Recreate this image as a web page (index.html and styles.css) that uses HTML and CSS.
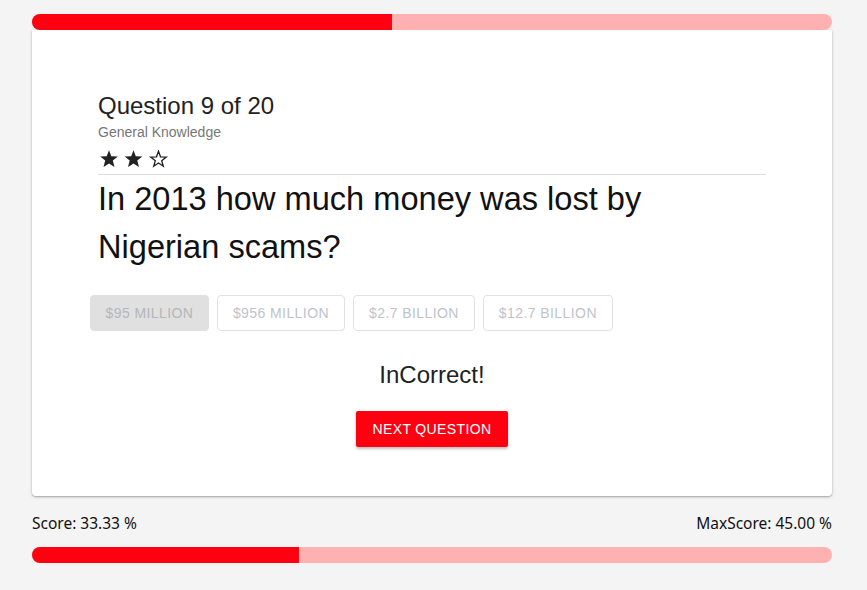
FILE: index.html
```
<!DOCTYPE html>
<html>
<head>
<meta charset="utf-8">
<link rel="stylesheet" href="styles.css">
</head>
<body>
<div class="page">
  <div class="bar bar-top"><div class="fill" style="width:45%"></div></div>
  <div class="card">
    <h1 class="title">Question 9 of 20</h1>
    <div class="category">General Knowledge</div>
    <div class="stars">
      <svg width="70" height="18" viewBox="0 0 70 18">
        <polygon points="9,0.3 11.3,6.2 17.8,6.5 12.8,10.6 14.5,17 9,13.4 3.5,17 5.2,10.6 0.2,6.5 6.7,6.2" fill="#222"/>
        <polygon transform="translate(24.5 0)" points="9,0.3 11.3,6.2 17.8,6.5 12.8,10.6 14.5,17 9,13.4 3.5,17 5.2,10.6 0.2,6.5 6.7,6.2" fill="#222"/>
        <polygon transform="translate(49.5 0)" points="9,1.2 11.0,6.8 16.8,7.1 12.2,10.7 13.8,16.2 9,13 4.2,16.2 5.8,10.7 1.2,7.1 7.0,6.8" fill="none" stroke="#222" stroke-width="1.3" stroke-linejoin="miter"/>
      </svg>
    </div>
    <div class="question">In 2013 how much money was lost by Nigerian scams?</div>
    <div class="answers">
      <button class="answer chosen">$95 Million</button>
      <button class="answer">$956 Million</button>
      <button class="answer">$2.7 Billion</button>
      <button class="answer">$12.7 Billion</button>
    </div>
    <div class="result">InCorrect!</div>
    <div class="next-wrap"><button class="next">Next Question</button></div>
  </div>
  <div class="scores">
    <span>Score: 33.33 %</span>
    <span>MaxScore: 45.00 %</span>
  </div>
  <div class="bar bar-bottom"><div class="fill" style="width:33.33%"></div></div>
</div>
</body>
</html>
```
FILE: styles.css
```
html, body {
  margin: 0;
  padding: 0;
  background: #f4f4f4;
}
.page {
  width: 800px;
  margin-left: 32px;
  padding-top: 14px;
  font-family: "Liberation Sans", Arial, sans-serif;
}
.bar {
  height: 16px;
  border-radius: 8px;
  background: #ffb0b0;
  overflow: hidden;
  display: flex;
}
.fill {
  height: 100%;
  background: #ff0010;
}
.bar-top {
  position: relative;
  z-index: 2;
}
.card {
  background: #fff;
  border-radius: 0 0 4px 4px;
  box-shadow: 0 1px 3px rgba(0,0,0,0.28), 0 1px 1px rgba(0,0,0,0.1);
  padding: 62px 66px 0 66px;
  height: 404px;
}
.title {
  margin: 0;
  font-size: 24px;
  line-height: 28px;
  font-weight: normal;
  color: #222;
}
.category {
  margin-top: 4px;
  font-size: 14px;
  line-height: 16px;
  color: #777;
}
.stars {
  margin-top: 10px;
  height: 18px;
  padding-left: 2px;
}
.stars svg {
  display: block;
}
.question {
  margin-top: 6px;
  border-top: 1px solid #ddd;
  font-size: 32.6px;
  line-height: 48px;
  color: #111;
  padding-right: 100px;
}
.answers {
  display: flex;
  gap: 8px;
  margin-top: 24px;
  margin-left: -8px;
}
.answer {
  height: 36px;
  padding: 0 15px;
  border: 1px solid #e2e2e2;
  border-radius: 4px;
  background: #fff;
  font-family: "Liberation Sans", Arial, sans-serif;
  font-size: 14px;
  letter-spacing: 0.42px;
  text-transform: uppercase;
  color: #bfc3ca;
}
.answer.chosen {
  background: #e0e0e0;
  border-color: #e0e0e0;
  color: #b4b6ba;
  padding: 0 14.5px;
}
.result {
  margin-top: 30px;
  text-align: center;
  font-size: 24px;
  line-height: 28px;
  color: #222;
}
.next-wrap {
  margin-top: 22px;
  display: flex;
  justify-content: center;
}
.next {
  height: 36px;
  padding: 0 16px;
  border: none;
  border-radius: 2px;
  background: #ff0010;
  color: #fff;
  font-family: "Liberation Sans", Arial, sans-serif;
  font-size: 14px;
  letter-spacing: 0.38px;
  text-transform: uppercase;
  box-shadow: 0 2px 3px rgba(0,0,0,0.25);
}
.scores {
  display: flex;
  justify-content: space-between;
  margin-top: 15px;
  font-family: "Noto Sans", sans-serif;
  font-size: 15.5px;
  line-height: 24px;
  color: #111;
}
.bar-bottom {
  margin-top: 12px;
}
```
